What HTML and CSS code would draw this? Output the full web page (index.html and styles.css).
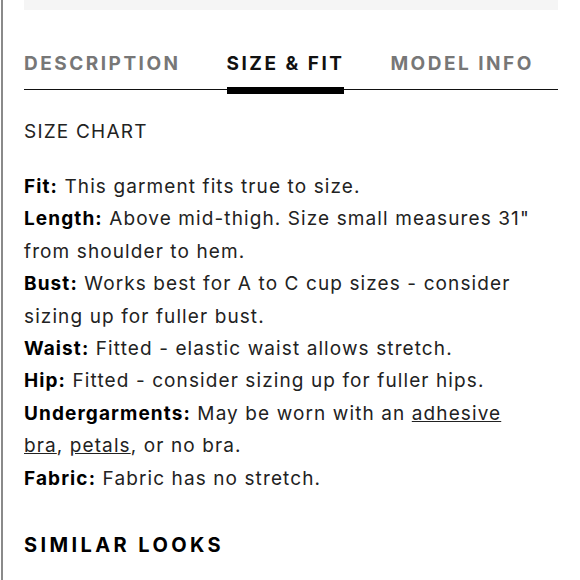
FILE: index.html
```html
<!DOCTYPE html>
<html lang="en">
<head>
    <meta charset="UTF-8">
    <meta name="viewport" content="width=device-width, initial-scale=1.0">
    <title>Size &amp; Fit</title>
    <link rel="stylesheet" href="styles.css">
</head>
<body>
<div class="page">
    <div class="top-strip"></div>

    <div class="tabs">
        <div class="tab">DESCRIPTION</div>
        <div class="tab active">SIZE &amp; FIT</div>
        <div class="tab">MODEL INFO</div>
    </div>

    <div class="size-fit">
        <p class="chart-title">SIZE CHART</p>
        <p class="details">
            <b>Fit:</b> This garment fits true to size.<br>
            <b>Length:</b> Above mid-thigh. Size small measures 31"<br>from shoulder to hem.<br>
            <b>Bust:</b> Works best for A to C cup sizes - consider<br>sizing up for fuller bust.<br>
            <b>Waist:</b> Fitted - elastic waist allows stretch.<br>
            <b>Hip:</b> Fitted - consider sizing up for fuller hips.<br>
            <b>Undergarments:</b> May be worn with an <a href="#">adhesive<br>bra</a>, <a href="#">petals</a>, or no bra.<br>
            <b>Fabric:</b> Fabric has no stretch.
        </p>
    </div>

    <h2 class="similar">SIMILAR LOOKS</h2>
</div>
</body>
</html>
```

FILE: styles.css
```css
body {
    margin: 0;
    font-family: 'Inter', sans-serif;
    color: #222;
    background: #fff;
}

.page {
    border-left: 2px solid #8a8a8a;
    margin-left: 1px;
    min-height: 580px;
    padding: 0 22px 0 21px;
    box-sizing: border-box;
}

.top-strip {
    height: 10px;
    background-color: #f5f5f5;
}

.tabs {
    display: flex;
    gap: 46px;
    margin-top: 42px;
    border-bottom: 1px solid #111;
    height: 37px;
}

.tab {
    position: relative;
    font-size: 19px;
    font-weight: bold;
    letter-spacing: 2.5px;
    color: #777;
    line-height: 24px;
}

.tab.active {
    color: #111;
}

.tab.active::after {
    content: '';
    position: absolute;
    left: 0;
    right: 0;
    bottom: -5px;
    height: 7px;
    background: #000;
}

.size-fit {
    margin-top: 30px;
}

.chart-title {
    margin: 0;
    font-size: 19px;
    letter-spacing: 1.2px;
    line-height: 24px;
}

.details {
    margin: 27px 0 0;
    font-size: 19px;
    line-height: 32.4px;
    letter-spacing: 1.1px;
}

.details b {
    color: #000;
}

.details a {
    color: inherit;
}

.similar {
    margin: 38px 0 0;
    font-size: 20px;
    letter-spacing: 3.4px;
    color: #000;
}
```
